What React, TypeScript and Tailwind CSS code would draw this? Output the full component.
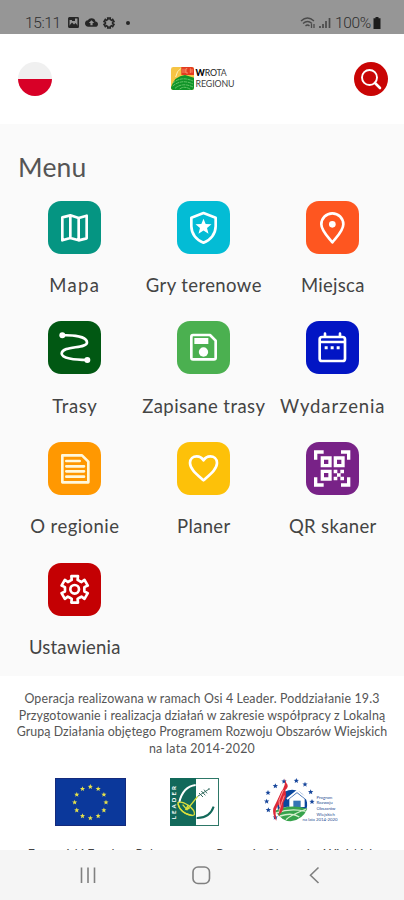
import type { ReactNode } from 'react';
import { MdCloudUpload } from 'react-icons/md';

interface MenuItem {
  label: string;
  color: string;
  tracking: string;
  icon: ReactNode;
}

const STAR = 'M0 -24 L6.5 -8 L24 -7 L10.500 4 L15 21 L0 11.500 L-15 21 L-10.500 4 L-24 -7 L-6.500 -8 Z';

// Six-tooth cog outline around the origin
const COG = Array.from({ length: 6 }, (_, i) => {
  const tooth = [[-30, 29], [-17, 30], [-14, 41], [14, 41], [17, 30], [30, 29]];
  return tooth
    .map(([deg, r]) => {
      const a = ((i * 60 + deg) * Math.PI) / 180;
      return `${(Math.sin(a) * r).toFixed(1)},${(-Math.cos(a) * r).toFixed(1)}`;
    })
    .join(' ');
}).join(' ');

// Icons are drawn on a 159x159 tile
const items: MenuItem[] = [
  {
    label: 'Mapa',
    color: 'bg-[#059582]',
    tracking: 'tracking-[1.3px]',
    icon: <path d="M43 49 67 43 92 51 116 44V112L92 118 67 111 43 118ZM67 43V111M92 51V118" />,
  },
  {
    label: 'Gry terenowe',
    color: 'bg-[#03bcd5]',
    tracking: 'tracking-[0.4px]',
    icon: (
      <>
        <path d="M79.500 36 116 50V76C116 99 100 118 79.500 125 59 118 43 99 43 76V50Z" />
        <path d={STAR} transform="translate(79.500 77)" fill="#fff" stroke="none" />
      </>
    ),
  },
  {
    label: 'Miejsca',
    color: 'bg-[#fe5620]',
    tracking: 'tracking-[0.3px]',
    icon: (
      <>
        <path d="M79 124C66 108 46 90 46 70A33 33 0 0 1 112 70C112 90 92 108 79 124Z" />
        <circle cx="79" cy="70" r="10" fill="#fff" stroke="none" />
      </>
    ),
  },
  {
    label: 'Trasy',
    color: 'bg-[#015813]',
    tracking: 'tracking-[0.6px]',
    icon: (
      <>
        <path d="M43 43C75 42 116 46 117 64 118 84 43 73 41 97 40 112 80 117 118 117" />
        <circle cx="43" cy="43" r="9" fill="#fff" stroke="none" />
        <circle cx="118" cy="117" r="9" fill="#fff" stroke="none" />
      </>
    ),
  },
  {
    label: 'Zapisane trasy',
    color: 'bg-[#4bb050]',
    tracking: 'tracking-[0.45px]',
    icon: (
      <>
        <path d="M48 42H99L116 59V110Q116 115 111 115H48Q43 115 43 110V47Q43 42 48 42Z" />
        <path d="M52 51H94V69H52Z" fill="#fff" stroke="none" />
        <circle cx="79.500" cy="93" r="14" fill="#fff" stroke="none" />
      </>
    ),
  },
  {
    label: 'Wydarzenia',
    color: 'bg-[#0215c4]',
    tracking: 'tracking-[0.9px]',
    icon: (
      <>
        <path d="M48 48H110Q117 48 117 55V113Q117 120 110 120H48Q41 120 41 113V55Q41 48 48 48ZM41 63H117M57 38V48M102 38V48" />
        <path d="M56 76H65V85H56ZM74 76H83V85H74ZM92 76H101V85H92Z" fill="#fff" stroke="none" />
      </>
    ),
  },
  {
    label: 'O regionie',
    color: 'bg-[#ff9801]',
    tracking: 'tracking-[0.45px]',
    icon: <path stroke="#fff8dc" d="M43 40H102L121 59V121H43ZM55 57H95M55 73H108M55 88H108M55 104H108" />,
  },
  {
    label: 'Planer',
    color: 'bg-[#fdc109]',
    tracking: 'tracking-[0.35px]',
    icon: (
      <path d="M79.500 115C58 96 39 81 39 63 39 50 49 43 59 43 69 43 76 49 79.500 55 83 49 90 43 100 43 110 43 120 50 120 63 120 81 101 96 79.500 115Z" />
    ),
  },
  {
    label: 'QR skaner',
    color: 'bg-[#782287]',
    tracking: 'tracking-[0.35px]',
    icon: (
      <>
        <path strokeWidth="10" strokeLinejoin="miter" strokeLinecap="butt" d="M29 53V30H53M105 30H128V53M128 106V129H105M53 129H29V106M49 48H72V71H49ZM88 48H111V71H88ZM49 88H72V111H49Z" />
        <path fill="#fff" stroke="none" d="M83 83H94V94H83ZM103 83H114V94H103ZM93 94H104V104H93ZM83 104H94V115H83ZM103 104H114V115H103Z" />
      </>
    ),
  },
  {
    label: 'Ustawienia',
    color: 'bg-[#c40003]',
    tracking: 'tracking-[0.2px]',
    icon: (
      <g transform="translate(80 79)">
        <polygon points={COG} />
        <circle r="13" />
      </g>
    ),
  },
];

function StatusBar() {
  return (
    <div className="flex h-[33.5px] shrink-0 items-end justify-between bg-[#969696] pl-[25px] pr-[23px] font-['Roboto'] text-[15.5px] font-light leading-[22px] text-[#2e2e2e]">
      <div className="flex items-center">
        <span className="tracking-[-0.4px]">15:11</span>
        <svg className="ml-[7px] h-[11px] w-[11px]" viewBox="0 0 11 11">
          <rect x="0.800" y="0.800" width="9.400" height="9.400" rx="0.500" fill="none" stroke="#262626" strokeWidth="1.500" />
          <path d="M1 9 4 5.500 6 7.500 7.500 6 10 9V10H1ZM1 1H7V4H4V3H1Z" fill="#262626" />
        </svg>
        <MdCloudUpload className="ml-[6px] h-[13px] w-[13px] text-[#262626]" />
        <svg className="ml-[5px] h-[12px] w-[12px]" viewBox="-48 -48 96 96">
          <polygon points={COG} fill="none" stroke="#262626" strokeWidth="13" />
        </svg>
        <span className="ml-[11px] h-1 w-1 rounded-full bg-[#262626]" />
      </div>
      <div className="flex items-center">
        <svg className="h-[13px] w-[32px]" viewBox="0 0 32 13" fill="none" stroke="#4a4a4a">
          <path d="M1 5Q7.500 -1 14 5M3 7.500Q7.500 3.500 12 7.500M5.500 10Q7.500 8 9.500 10" strokeWidth="1.300" />
          <path d="M11.500 8V12M14 8V12" strokeWidth="1.300" />
          <path d="M20 10V12M23 8V12M26 5V12M29.500 2V12" strokeWidth="1.700" />
        </svg>
        <span className="ml-[3px] tracking-[-0.3px]">100%</span>
        <svg className="ml-[2px] h-[12px] w-[8px]" viewBox="0 0 8 12">
          <path d="M2.500 0H5.500V1.300H7.500V12H0.500V1.300H2.500Z" fill="#1c1c1c" />
        </svg>
      </div>
    </div>
  );
}

function RegionLogo() {
  return (
    <div className="flex items-center">
      <svg className="h-[23px] w-[23px]" viewBox="0 0 69 69">
        <rect width="69" height="69" rx="7" fill="#f6c445" />
        <path d="M14 30Q17 12 30 4" fill="none" stroke="#fff0b4" strokeWidth="3" />
        <path d="M31 0H62Q69 0 69 7V24H31Z" fill="#e43b20" />
        <path d="M36 5V18M42 5V18M49 5H45V18H51M58 4V18M63 6V17" fill="none" stroke="#ffb38a" strokeWidth="2" />
        <path d="M0 61Q10 27 42 24L69 32V62Q69 69 62 69H7Q0 69 0 61Z" fill="#109428" />
        <path d="M5 49Q30 26 66 42M5 57Q32 35 66 51M12 64Q34 45 66 60M26 66Q40 55 58 67" fill="none" stroke="#75cc73" strokeWidth="2.500" strokeDasharray="10 2" />
      </svg>
      <div className="ml-[2px] font-['Lato'] text-[8.800px] leading-[10.500px] text-[#3f3f3f]">
        <p className="tracking-[-0.2px]">
          <b className="font-black text-black">W</b>
          <span className="text-[#222]">RO</span>TA
        </p>
        <p className="tracking-[-0.1px]">REGIONU</p>
      </div>
    </div>
  );
}

function Header() {
  return (
    <header className="flex h-[90.500px] shrink-0 items-center justify-between bg-white pl-[17.500px] pr-[16.500px]">
      <div className="h-[34px] w-[34px] overflow-hidden rounded-full bg-[#f0f0f0]">
        <div className="mt-[17px] h-[17px] bg-[#d80027]" />
      </div>
      <RegionLogo />
      <button className="flex h-[34px] w-[34px] items-center justify-center rounded-full bg-[#c90505]" aria-label="Szukaj">
        <svg className="h-[22px] w-[22px]" viewBox="0 0 22 22" fill="none" stroke="#fff">
          <circle cx="9.500" cy="9.500" r="7.500" strokeWidth="1.900" />
          <path d="M15 15 20 20" strokeWidth="2.600" strokeLinecap="round" />
        </svg>
      </button>
    </header>
  );
}

function MenuTile({ item }: { item: MenuItem }) {
  return (
    <div className="flex h-[120.700px] flex-col items-center">
      <div className={`h-[53px] w-[53px] shrink-0 rounded-[13px] ${item.color}`}>
        <svg viewBox="0 0 159 159" fill="none" stroke="#fff" strokeWidth="8" strokeLinejoin="round" strokeLinecap="round">
          {item.icon}
        </svg>
      </div>
      <span className={`mt-[19.300px] whitespace-nowrap text-[18.500px] leading-[24px] text-[#444] ${item.tracking}`}>
        {item.label}
      </span>
    </div>
  );
}

function EuFlag() {
  return (
    <svg className="h-[48px] w-[71px]" viewBox="0 0 213 144">
      <rect width="213" height="144" fill="#0b389b" />
      <rect x="1.500" y="1.500" width="210" height="141" fill="none" stroke="#142a7c" strokeWidth="3" />
      {Array.from({ length: 12 }, (_, i) => {
        const a = (i * Math.PI) / 6;
        return (
          <path
            key={i}
            d={STAR}
            fill="#e6e14b"
            transform={`translate(${(106 + Math.sin(a) * 47).toFixed(1)} ${(73 - Math.cos(a) * 47).toFixed(1)}) scale(0.32)`}
          />
        );
      })}
    </svg>
  );
}

function LeaderLogo() {
  return (
    <svg className="h-[48px] w-[49px]" viewBox="0 0 147 144">
      <rect x="1.500" y="1.500" width="144" height="141" fill="#fff" stroke="#2d7767" strokeWidth="3" />
      <path d="M0 0H78V144H0Z" fill="#12695a" />
      <text transform="translate(19 124) rotate(-90)" fontFamily="Lato" fontSize="18" fontWeight="900" fill="#fff" textLength="100">
        LEADER
      </text>
      <path d="M28 72Q39 26 77 21" fill="none" stroke="#fff" strokeWidth="6" />
      <path d="M80 120Q119 121 131 86" fill="none" stroke="#12695a" strokeWidth="6" />
      <g fill="none" stroke="#dcdf3b" strokeWidth="4">
        <path d="M24 74Q34 68 55 82 76 97 73 110 68 116 46 106 24 92 24 74Z" />
        <path d="M24 77Q30 106 67 113M38 80 51 95 83 55M54 82 48 94 59 91" />
      </g>
      <path d="M83 55 116 34M87 45 99 57M94 39 106 52M102 35 111 46M114 33 120 33" stroke="#356c60" strokeWidth="3" />
    </svg>
  );
}

function RuralLogo() {
  const stars = [[45, 22], [71, 8], [23, 42], [19, 68], [24, 94], [45, 116], [108, 6], [134, 17], [151, 40], [155, 69]];
  return (
    <div className="flex items-end">
      <svg className="h-[50px] w-[56px]" viewBox="0 0 168 150">
        {stars.map(([x, y]) => (
          <path key={`${x}-${y}`} d={STAR} fill="#17469b" transform={`translate(${x - 8} ${y + 5}) scale(0.33)`} />
        ))}
        <path d="M45 98A45 45 0 1 1 130 98Q90 78 45 98Z" fill="#0b489e" />
        <path d="M76 65 102 43 128 65V92H76Z" fill="#0b489e" />
        <path d="M79 66 102 48 125 66V90H79Z" fill="#fff" />
        <path d="M72 66 102 42 132 66" fill="none" stroke="#fff" strokeWidth="6" />
        <path d="M91 71H113V90H91Z" fill="#3575b5" />
        <path d="M36 101Q80 79 133 95 119 128 83 133 56 132 36 101Z" fill="#37a34c" />
        <path d="M39 108Q83 92 128 103M51 117Q88 105 109 120M69 128Q83 114 130 96" fill="none" stroke="#d5efcd" strokeWidth="4" />
        <path d="M65 4Q70 25 54 45 47 62 31 94 27 111 40 132 33 90 49 82 53 97 45 117 65 102 61 77 73 58 67 39 80 28 70 18 65 4Z" fill="#de2938" />
        <path d="M61 39 48 70 50 90M64 56 55 80 48 103" fill="none" stroke="#ff9696" strokeWidth="3" />
      </svg>
      <div className="-ml-[2px] mb-[4px] whitespace-nowrap font-['Lato'] text-[4.300px] leading-[5.700px] text-[#274e93]">
        <p>Program</p>
        <p>Rozwoju</p>
        <p>Obszarów</p>
        <p>Wiejskich</p>
        <p className="-ml-[14px]">na lata 2014-2020</p>
      </div>
    </div>
  );
}

function Footer() {
  return (
    <footer className="h-[174.500px] shrink-0 overflow-hidden bg-white pt-[15.300px]">
      <div className="flex flex-col items-center whitespace-nowrap text-[12.400px] leading-[16.800px] text-[#555]">
        <p className="tracking-[0.16px]">Operacja realizowana w ramach Osi 4 Leader. Poddziałanie 19.3</p>
        <p className="tracking-[0.11px]">Przygotowanie i realizacja działań w zakresie współpracy z Lokalną</p>
        <p className="tracking-[0.07px]">Grupą Działania objętego Programem Rozwoju Obszarów Wiejskich</p>
        <p className="tracking-[0.3px]">na lata 2014-2020</p>
      </div>
      <div className="mt-[19.200px] flex h-[50px] items-center pl-[54.500px]">
        <EuFlag />
        <div className="ml-[44px]">
          <LeaderLogo />
        </div>
        <div className="ml-[44px]">
          <RuralLogo />
        </div>
      </div>
      <p className="mt-[19.500px] whitespace-nowrap text-center text-[12.400px] leading-[16.800px] text-[#444]">
        Europejski Fundusz Rolny na rzecz Rozwoju Obszarów Wiejskich
      </p>
    </footer>
  );
}

function NavBar() {
  return (
    <nav className="flex h-[50px] shrink-0 items-center bg-[#f5f5f5]">
      <svg className="h-[50px] w-full" viewBox="0 0 404 50" fill="none" stroke="#808080" strokeWidth="1.600">
        <path d="M81.500 17.500V33M88 17.500V33M94.500 17.500V33" />
        <rect x="193" y="17" width="16.500" height="16.500" rx="5" />
        <path d="M318.500 17.500 310.500 25.300 318.500 33" />
      </svg>
    </nav>
  );
}

export default function App() {
  return (
    <div className="flex h-[900px] w-[404px] flex-col overflow-hidden bg-white font-['Lato','Noto_Sans',sans-serif]">
      <StatusBar />
      <Header />
      <main className="h-[551.500px] shrink-0 bg-[#fafafa] pt-[26.500px]">
        <h1 className="pl-[18px] text-[26.500px] leading-[32px] tracking-[0.2px] text-[#555]">Menu</h1>
        <div className="mt-[18.200px] grid grid-cols-[129px_129px_129px] pl-[10.300px]">
          {items.map((item) => (
            <MenuTile key={item.label} item={item} />
          ))}
        </div>
      </main>
      <Footer />
      <NavBar />
    </div>
  );
}
